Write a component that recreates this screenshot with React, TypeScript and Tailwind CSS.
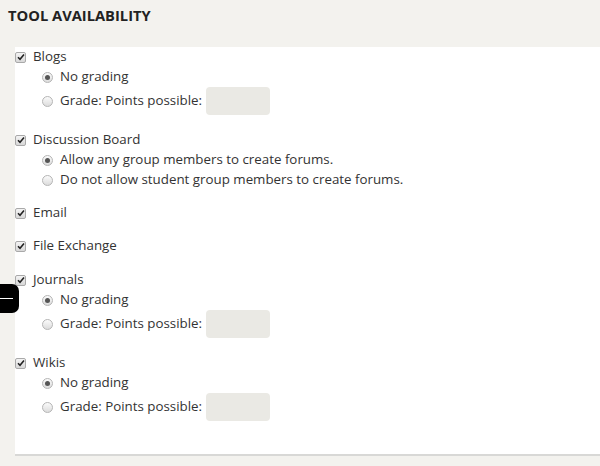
type Opt = { label: string; checked?: boolean; input?: boolean };
type Tool = { name: string; options: Opt[]; gap: string };

const tools: Tool[] = [
  {
    name: "Blogs",
    gap: "mb-[15px]",
    options: [{ label: "No grading", checked: true }, { label: "Grade: Points possible:", input: true }],
  },
  {
    name: "Discussion Board",
    gap: "mb-[13px]",
    options: [
      { label: "Allow any group members to create forums.", checked: true },
      { label: "Do not allow student group members to create forums." },
    ],
  },
  { name: "Email", gap: "mb-[13px]", options: [] },
  { name: "File Exchange", gap: "mb-[14px]", options: [] },
  {
    name: "Journals",
    gap: "mb-[15px]",
    options: [{ label: "No grading", checked: true }, { label: "Grade: Points possible:", input: true }],
  },
  {
    name: "Wikis",
    gap: "mb-0",
    options: [{ label: "No grading", checked: true }, { label: "Grade: Points possible:", input: true }],
  },
];

function CheckBox() {
  return (
    <span className="flex h-[11px] w-[11px] items-center justify-center rounded-[2px] border border-[#a9a9a9] bg-gradient-to-b from-[#f4f4f4] to-[#d8d8d8]">
      <svg width="8" height="8" viewBox="0 0 8 8">
        <path d="M1 4.2 L3 6.2 L7 1.5" fill="none" stroke="#222" strokeWidth="1.6" />
      </svg>
    </span>
  );
}

function Radio({ checked }: { checked?: boolean }) {
  return (
    <span className="flex h-[11px] w-[11px] items-center justify-center rounded-full border border-[#b5b5b5] bg-gradient-to-b from-[#fbfbfb] to-[#dcdcdc]">
      {checked && <span className="h-[5px] w-[5px] rounded-full bg-[#555]" />}
    </span>
  );
}

export default function App() {
  return (
    <div className="h-[466px] w-[600px] overflow-hidden bg-[#f3f2ee] text-[13.33px] text-[#333] [font-family:'Open_Sans',sans-serif]">
      <h2 className="h-[47px] pl-2 pt-[5px] text-[14.7px] font-bold leading-5 text-[#222]">TOOL AVAILABILITY</h2>
      <div className="relative ml-[15px] h-[409px] border-b-2 border-[#d8d8d6] bg-white">
        {tools.map((tool) => (
          <div key={tool.name} className={`flex flex-col ${tool.gap}`}>
            <label className="flex h-5 items-center gap-[7px]">
              <CheckBox />
              <span>{tool.name}</span>
            </label>
            {tool.options.map((o) => (
              <label key={o.label} className={`flex items-center gap-[7px] pl-[27px] ${o.input ? "h-7" : "h-5"}`}>
                <Radio checked={o.checked} />
                <span>{o.label}</span>
                {o.input && <span className="-ml-[3px] h-7 w-16 rounded-[4px] bg-[#eae9e4]" />}
              </label>
            ))}
          </div>
        ))}
      </div>
      <div className="absolute left-0 top-[284px] flex h-[29px] w-[19px] items-center rounded-r-[7px] bg-black">
        <span className="h-[1.5px] w-[13px] bg-white" />
      </div>
    </div>
  );
}
